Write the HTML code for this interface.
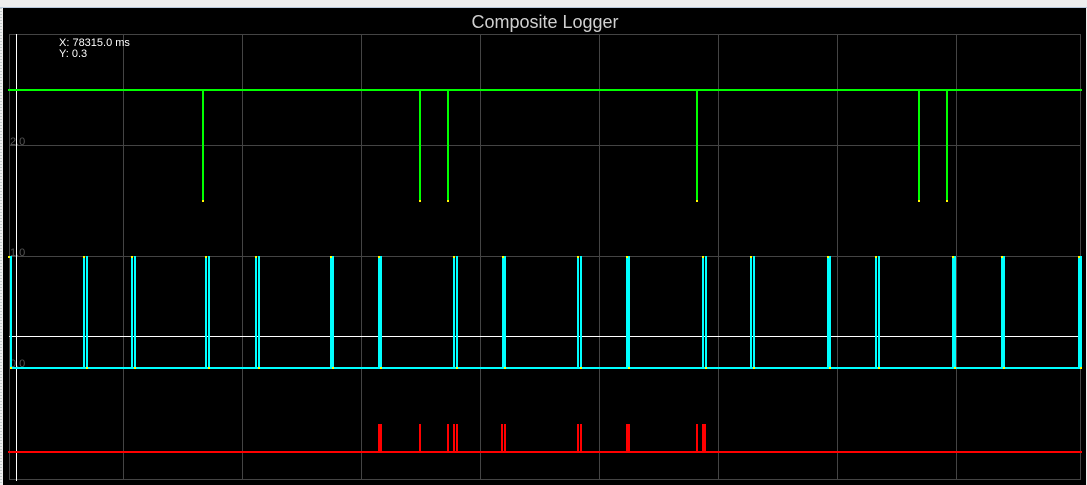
<!DOCTYPE html>
<html><head><meta charset="utf-8"><style>
html,body{margin:0;padding:0;width:1087px;height:485px;overflow:hidden;background:#ededed;}
svg{display:block}
</style></head><body>
<svg width="1087" height="485" xmlns="http://www.w3.org/2000/svg" shape-rendering="crispEdges">
<rect x="0" y="0" width="1087" height="485" fill="#eeeeee"/>
<rect x="0" y="7" width="1087" height="1" fill="#b8c8dc"/>
<line x1="1" y1="8" x2="1" y2="485" stroke="#9aa" stroke-dasharray="1,2"/>
<rect x="3" y="8" width="1083" height="477" fill="#000"/>
<text x="545" y="28" fill="#d0d0d0" font-family="Liberation Sans, sans-serif" font-size="18" text-anchor="middle">Composite Logger</text>
<g stroke="#444" stroke-width="1" fill="none">
<rect x="9.5" y="34.5" width="1071" height="445"/>
<line x1="123.5" y1="34" x2="123.5" y2="480"/>
<line x1="242.5" y1="34" x2="242.5" y2="480"/>
<line x1="361.5" y1="34" x2="361.5" y2="480"/>
<line x1="480.5" y1="34" x2="480.5" y2="480"/>
<line x1="599.5" y1="34" x2="599.5" y2="480"/>
<line x1="718.5" y1="34" x2="718.5" y2="480"/>
<line x1="837.5" y1="34" x2="837.5" y2="480"/>
<line x1="956.5" y1="34" x2="956.5" y2="480"/>
<line x1="9" y1="145.5" x2="1080" y2="145.5"/>
<line x1="9" y1="256.5" x2="1080" y2="256.5"/>
<line x1="9" y1="367.5" x2="1080" y2="367.5"/>
</g>
<g fill="#555" font-family="Liberation Sans, sans-serif" font-size="11">
<text x="10" y="145">2.0</text><text x="10" y="256">1.0</text><text x="10" y="367">0.0</text>
</g>
<g fill="#fff" font-family="Liberation Sans, sans-serif" font-size="11">
<text x="59" y="46">X: 78315.0 ms</text><text x="59" y="57">Y: 0.3</text>
</g>
<rect x="16" y="34" width="1" height="447" fill="#fff"/>
<rect x="9" y="336" width="1071" height="1" fill="#fff"/>
<!-- green -->
<g fill="#00ff00">
<rect x="8" y="89" width="1074" height="2"/>
<rect x="202" y="90" width="2" height="111"/>
<rect x="419" y="90" width="2" height="111"/>
<rect x="447" y="90" width="2" height="111"/>
<rect x="696" y="90" width="2" height="111"/>
<rect x="918" y="90" width="2" height="111"/>
<rect x="946" y="90" width="2" height="111"/>
</g>
<g fill="#ff0">
<rect x="202" y="200" width="2" height="2"/><rect x="419" y="200" width="2" height="2"/><rect x="447" y="200" width="2" height="2"/><rect x="696" y="200" width="2" height="2"/><rect x="918" y="200" width="2" height="2"/><rect x="946" y="200" width="2" height="2"/>
</g>
<!-- cyan -->
<g fill="#00ffff">
<rect x="10" y="256" width="2" height="113"/>
<rect x="10" y="367" width="1070" height="2"/>
<rect x="83" y="256" width="2" height="113"/><rect x="86" y="256" width="2" height="113"/>
<rect x="131" y="256" width="2" height="113"/><rect x="134" y="256" width="2" height="113"/>
<rect x="205" y="256" width="2" height="113"/><rect x="208" y="256" width="2" height="113"/>
<rect x="255" y="256" width="2" height="113"/><rect x="258" y="256" width="2" height="113"/>
<rect x="330" y="256" width="2" height="113"/><rect x="332" y="256" width="2" height="113"/>
<rect x="378" y="256" width="2" height="113"/><rect x="380" y="256" width="2" height="113"/>
<rect x="453" y="256" width="2" height="113"/><rect x="456" y="256" width="2" height="113"/>
<rect x="502" y="256" width="2" height="113"/><rect x="504" y="256" width="2" height="113"/>
<rect x="577" y="256" width="2" height="113"/><rect x="580" y="256" width="2" height="113"/>
<rect x="626" y="256" width="2" height="113"/><rect x="628" y="256" width="2" height="113"/>
<rect x="702" y="256" width="2" height="113"/><rect x="705" y="256" width="2" height="113"/>
<rect x="750" y="256" width="2" height="113"/><rect x="753" y="256" width="2" height="113"/>
<rect x="827" y="256" width="2" height="113"/><rect x="829" y="256" width="2" height="113"/>
<rect x="875" y="256" width="2" height="113"/><rect x="878" y="256" width="2" height="113"/>
<rect x="952" y="256" width="2" height="113"/><rect x="954" y="256" width="2" height="113"/>
<rect x="1001" y="256" width="2" height="113"/><rect x="1003" y="256" width="2" height="113"/>
<rect x="1078" y="256" width="4" height="113"/>
</g>
<g fill="#ff0">
<rect x="8" y="256" width="2" height="2"/><rect x="10" y="367" width="2" height="2"/>
<rect x="83" y="256" width="2" height="2"/><rect x="86" y="367" width="2" height="2"/>
<rect x="131" y="256" width="2" height="2"/><rect x="134" y="367" width="2" height="2"/>
<rect x="205" y="256" width="2" height="2"/><rect x="208" y="367" width="2" height="2"/>
<rect x="255" y="256" width="2" height="2"/><rect x="258" y="367" width="2" height="2"/>
<rect x="330" y="256" width="2" height="2"/><rect x="332" y="367" width="2" height="2"/>
<rect x="378" y="256" width="2" height="2"/><rect x="380" y="367" width="2" height="2"/>
<rect x="453" y="256" width="2" height="2"/><rect x="456" y="367" width="2" height="2"/>
<rect x="502" y="256" width="2" height="2"/><rect x="504" y="367" width="2" height="2"/>
<rect x="577" y="256" width="2" height="2"/><rect x="580" y="367" width="2" height="2"/>
<rect x="626" y="256" width="2" height="2"/><rect x="628" y="367" width="2" height="2"/>
<rect x="702" y="256" width="2" height="2"/><rect x="705" y="367" width="2" height="2"/>
<rect x="750" y="256" width="2" height="2"/><rect x="753" y="367" width="2" height="2"/>
<rect x="827" y="256" width="2" height="2"/><rect x="829" y="367" width="2" height="2"/>
<rect x="875" y="256" width="2" height="2"/><rect x="878" y="367" width="2" height="2"/>
<rect x="952" y="256" width="2" height="2"/><rect x="954" y="367" width="2" height="2"/>
<rect x="1001" y="256" width="2" height="2"/><rect x="1003" y="367" width="2" height="2"/>
<rect x="1078" y="256" width="2" height="2"/><rect x="1080" y="367" width="2" height="2"/>
</g>
<!-- red -->
<g fill="#ff0000">
<rect x="8" y="451" width="1074" height="2"/>
<rect x="378" y="424" width="4" height="28"/>
<rect x="419" y="424" width="2" height="28"/>
<rect x="447" y="424" width="2" height="28"/>
<rect x="453" y="424" width="2" height="28"/>
<rect x="456" y="424" width="2" height="28"/>
<rect x="501" y="424" width="2" height="28"/>
<rect x="504" y="424" width="2" height="28"/>
<rect x="577" y="424" width="2" height="28"/>
<rect x="580" y="424" width="2" height="28"/>
<rect x="626" y="424" width="4" height="28"/>
<rect x="696" y="424" width="2" height="28"/>
<rect x="702" y="424" width="4" height="28"/>
</g>
</svg>
</body></html>
